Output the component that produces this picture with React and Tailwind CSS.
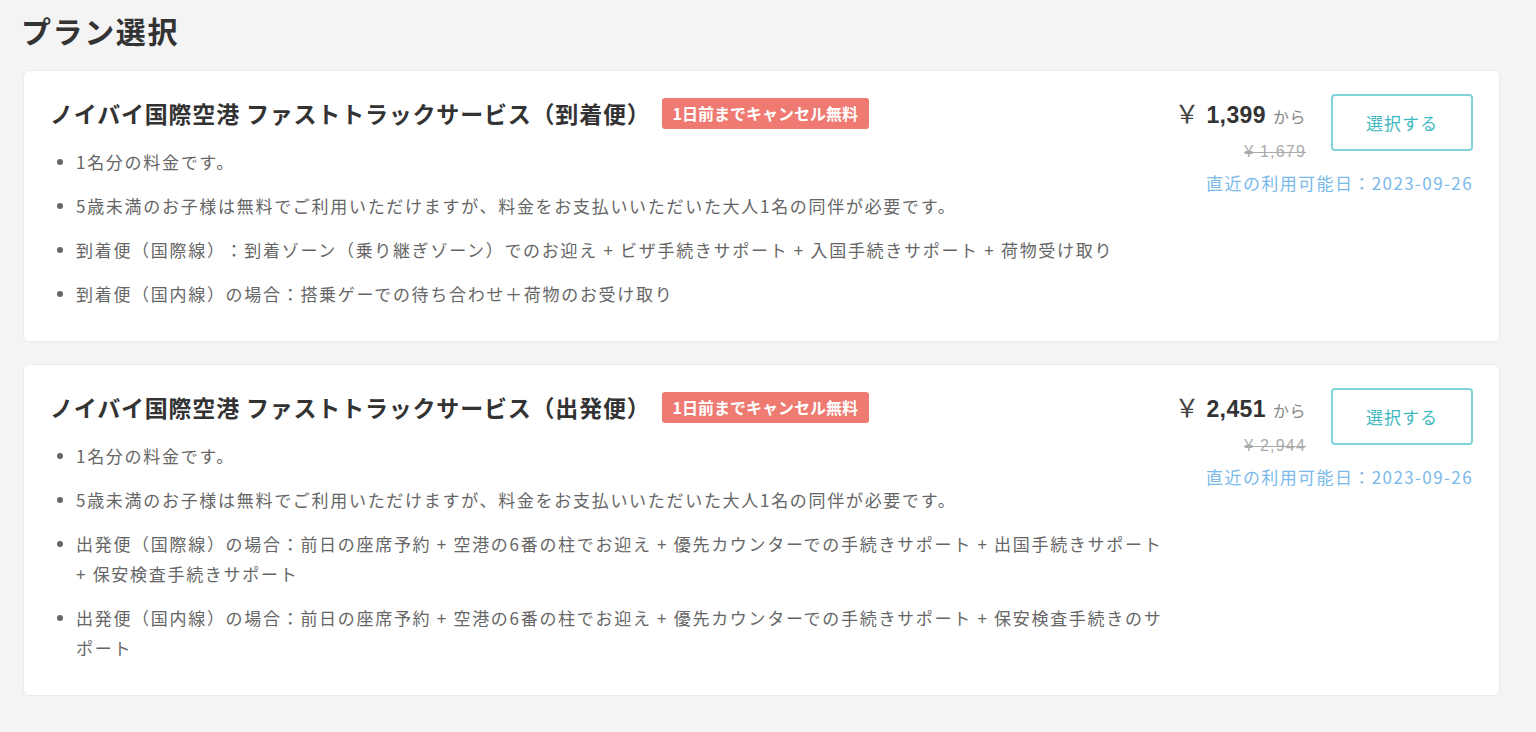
const plans = [
  {
    title: "ノイバイ国際空港 ファストトラックサービス（到着便）",
    price: "1,399",
    original: "1,679",
    date: "2023-09-26",
    notes: [
      "1名分の料金です。",
      "5歳未満のお子様は無料でご利用いただけますが、料金をお支払いいただいた大人1名の同伴が必要です。",
      "到着便（国際線）：到着ゾーン（乗り継ぎゾーン）でのお迎え + ビザ手続きサポート + 入国手続きサポート + 荷物受け取り",
      "到着便（国内線）の場合：搭乗ゲーでの待ち合わせ＋荷物のお受け取り",
    ],
  },
  {
    title: "ノイバイ国際空港 ファストトラックサービス（出発便）",
    price: "2,451",
    original: "2,944",
    date: "2023-09-26",
    notes: [
      "1名分の料金です。",
      "5歳未満のお子様は無料でご利用いただけますが、料金をお支払いいただいた大人1名の同伴が必要です。",
      "出発便（国際線）の場合：前日の座席予約 + 空港の6番の柱でお迎え + 優先カウンターでの手続きサポート + 出国手続きサポート + 保安検査手続きサポート",
      "出発便（国内線）の場合：前日の座席予約 + 空港の6番の柱でお迎え + 優先カウンターでの手続きサポート + 保安検査手続きのサポート",
    ],
  },
];

function PlanCard({ plan }) {
  return (
    <div className="flex w-[1477px] rounded-[6px] border border-[#ebebeb] bg-white pl-[26px] pr-[26px] pt-[23px] pb-[32px]">
      {/* Details */}
      <div className="flex-1 pt-[4px]">
        <div className="flex items-center gap-[11px]">
          <h2 className="text-[23px] font-bold leading-[31px] tracking-[0.8px] text-[#333]">
            {plan.title}
          </h2>
          <span className="rounded-[3px] bg-[#ef7a72] px-[11px] text-[16px] font-bold leading-[31px] text-white">
            1日前までキャンセル無料
          </span>
        </div>
        <ul className="mt-[18px] flex flex-col gap-[14px] pr-[8px]">
          {plan.notes.map((note) => (
            <li key={note} className="flex text-[17px] leading-[30px] tracking-[1.7px] text-[#666]">
              <span className="mt-[12px] ml-[7px] mr-[13px] h-[6px] w-[6px] shrink-0 rounded-full bg-[#666]" />
              <span>{note}</span>
            </li>
          ))}
        </ul>
      </div>

      {/* Price + action */}
      <div className="flex w-[300px] shrink-0 flex-col items-end">
        <div className="flex items-start gap-[25px]">
          <div className="flex flex-col items-end">
            <div className="flex items-baseline text-[#333]">
              <span className="text-[25px] text-[#444]">￥</span>
              <span className="ml-[7px] font-['Liberation_Sans','Noto_Sans_CJK_JP',sans-serif] text-[23px] font-bold tracking-[0.4px]">
                {plan.price}
              </span>
              <span className="ml-[7px] text-[16px] tracking-[0.5px] text-[#888]">から</span>
            </div>
            <span className="mt-[7px] font-['Liberation_Sans','Noto_Sans_CJK_JP',sans-serif] text-[16px] tracking-[1.2px] text-[#aaa] line-through">
              ¥ {plan.original}
            </span>
          </div>
          <button className="h-[57px] w-[142px] rounded-[4px] border-2 border-[#7fd4d9] text-[17px] tracking-[1px] text-[#3fb9c1]">
            選択する
          </button>
        </div>
        <p className="mt-[4px] text-[17px] leading-[30px] tracking-[1.4px] text-[#7ab9ea]">
          直近の利用可能日：{plan.date}
        </p>
      </div>
    </div>
  );
}

export default function App() {
  return (
    <div className="min-h-screen bg-[#f4f4f4] pl-[23px] pt-[10px] pb-[30px] font-['Noto_Sans_CJK_JP',sans-serif] [text-spacing-trim:space-all]">
      <h1 className="-ml-[2px] text-[30px] font-bold leading-[40px] tracking-[1.6px] text-[#333]">プラン選択</h1>
      <div className="mt-[20px] flex flex-col gap-[22px]">
        {plans.map((plan) => (
          <PlanCard key={plan.title} plan={plan} />
        ))}
      </div>
    </div>
  );
}
